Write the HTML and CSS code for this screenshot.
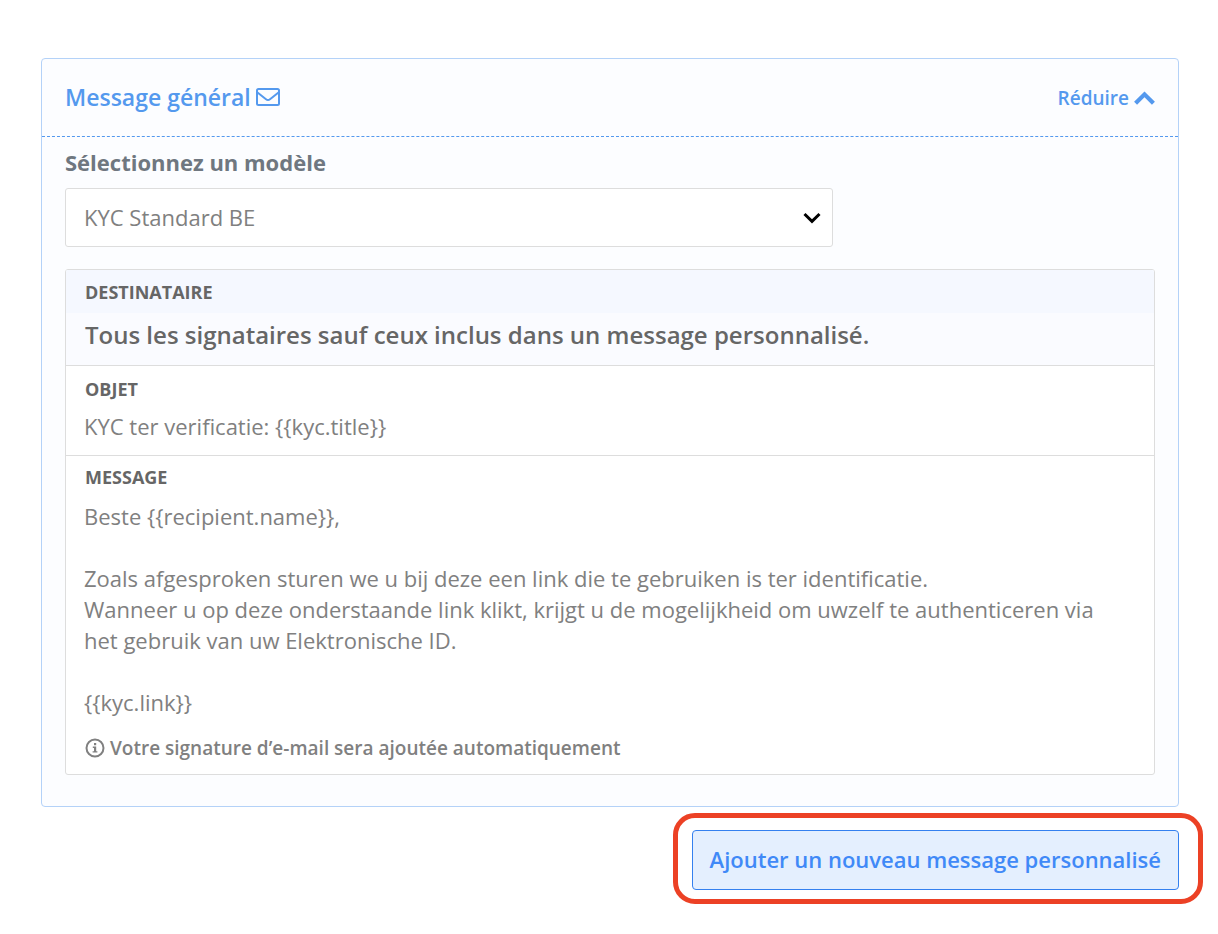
FILE: index.html
```html
<!DOCTYPE html>
<html lang="fr">
<head>
<meta charset="utf-8">
<meta name="viewport" content="width=device-width, initial-scale=1">
<title>Message général</title>
<link rel="stylesheet" href="styles.css">
</head>
<body>
<main class="page">
  <section class="card">
    <header class="card-header">
      <h2 class="card-title">Message général
        <svg class="icon-mail" viewBox="0 0 24 18" aria-hidden="true"><rect x="1" y="1" width="22" height="16" rx="1.5"/><path d="M1.5 4.5 10 11.2Q12 12.8 14 11.2L22.500 4.500"/></svg>
      </h2>
      <button class="collapse" type="button">Réduire
        <svg class="icon-up" viewBox="0 0 20 14" aria-hidden="true"><path d="M1.500 12.500 10 4 18.500 12.500"/></svg>
      </button>
    </header>
    <div class="card-body">
      <label class="select-label" for="template">Sélectionnez un modèle</label>
      <div class="select-wrap">
        <select class="select" id="template"><option>KYC Standard BE</option></select>
        <svg class="icon-down" viewBox="0 0 18 12" aria-hidden="true"><path d="M1.500 2 9 9.300 16.500 2"/></svg>
      </div>
      <div class="message">
        <div class="recipient">
          <h3 class="field-label recipient-label">Destinataire</h3>
          <p class="recipient-text">Tous les signataires sauf ceux inclus dans un message personnalisé.</p>
        </div>
        <div class="field subject">
          <label class="field-label" for="subject">Objet</label>
          <input class="text-input" id="subject" type="text" value="KYC ter verificatie: {{kyc.title}}">
        </div>
        <div class="field body">
          <label class="field-label" for="body">Message</label>
          <textarea class="text-area" id="body" rows="7">Beste {{recipient.name}},

Zoals afgesproken sturen we u bij deze een link die te gebruiken is ter identificatie.
Wanneer u op deze onderstaande link klikt, krijgt u de mogelijkheid om uwzelf te authenticeren via het gebruik van uw Elektronische ID.

{{kyc.link}}</textarea>
          <p class="note">
            <svg class="icon-info" viewBox="0 0 20 20" aria-hidden="true"><circle cx="10" cy="10" r="8.500"/><path d="M9 5h2.200v2.200H9zM7.800 8.500h3.400v4.700h1.200v1.400H7.600v-1.400h1.400V9.900H7.800z"/></svg>
            Votre signature d’e-mail sera ajoutée automatiquement
          </p>
        </div>
      </div>
    </div>
  </section>
  <div class="actions">
    <button class="add" type="button">Ajouter un nouveau message personnalisé</button>
  </div>
</main>
</body>
</html>
```
FILE: styles.css
```css
* { box-sizing: border-box; }
body {
  margin: 0;
  background: #fff;
  color: #666;
  font-family: "Open Sans", "Noto Sans", sans-serif;
}
h2, h3, p { margin: 0; }
button, input, select, textarea { font: inherit; color: inherit; }
svg { flex: none; fill: none; stroke: currentColor; }

.page { padding: 58px 39px 44px 41px; }
.card {
  border: 1px solid #b4d2f8;
  border-radius: 4px;
  background: #fcfdff;
}
.card-header {
  display: flex;
  align-items: center;
  justify-content: space-between;
  height: 78px;
  padding: 0 23px;
  border-bottom: 1px dashed #5499ee;
  color: #5499ee;
}
.card-title {
  display: flex;
  align-items: center;
  gap: 5px;
  padding-bottom: 2px;
  font-size: 23px;
  font-weight: 600;
}
.icon-mail { width: 24px; height: 18px; stroke-width: 2; }
.collapse {
  display: flex;
  align-items: center;
  gap: 5px;
  padding: 0;
  border: 0;
  background: none;
  font-size: 19px;
  font-weight: 600;
}
.icon-up { width: 21px; height: 15px; stroke-width: 4; }
.card-body { padding: 9px 23px 31px; }
.select-label {
  display: block;
  color: #6f7780;
  font-size: 22px;
  font-weight: 700;
  line-height: 32px;
}
.select-wrap {
  position: relative;
  max-width: 768px;
  margin: 10px 0 22px;
}
.select {
  display: block;
  width: 100%;
  height: 59px;
  padding: 0 48px 2px 18px;
  appearance: none;
  border: 1px solid #ddd;
  border-radius: 3px;
  background: #fff;
  color: #808080;
  font-size: 22px;
}
.icon-down {
  position: absolute;
  top: 24px;
  right: 12px;
  width: 18px;
  height: 12px;
  color: #000;
  stroke-width: 3;
  pointer-events: none;
}
.message {
  overflow: hidden;
  border: 1px solid #ddd;
  border-radius: 3px;
  background: #fff;
}
.field-label {
  display: block;
  color: #666;
  font-size: 18px;
  font-weight: 700;
  line-height: 24px;
  text-transform: uppercase;
}
.recipient { border-bottom: 1px solid #ddd; background: #fafbff; }
.recipient-label { padding: 10px 19px 9px; background: #f5f8ff; }
.recipient-text {
  padding: 6px 19px 14px;
  font-size: 24px;
  font-weight: 600;
  line-height: 32px;
}
.field { padding: 0 18px; color: #808080; }
.field .field-label { padding: 0 1px; }
.subject { padding-top: 11px; padding-bottom: 13px; border-bottom: 1px solid #ddd; }
.body { padding-top: 9px; padding-bottom: 12px; }
.text-input, .text-area {
  display: block;
  width: 100%;
  padding: 0;
  border: 0;
  outline: 0;
  background: none;
  font-size: 22px;
  line-height: 31px;
}
.text-input { height: 31px; margin-top: 10px; }
.text-area { margin-top: 12px; padding-right: 18px; resize: none; overflow: hidden; }
.note {
  display: flex;
  align-items: center;
  gap: 5px;
  margin-top: 16px;
  font-size: 19px;
  font-weight: 600;
  line-height: 28px;
}
.icon-info { width: 20px; height: 20px; margin-left: 1px; stroke-width: 2; }
.icon-info path { fill: currentColor; stroke: none; }
.actions { display: flex; justify-content: flex-end; margin-top: 23px; }
.add {
  position: relative;
  height: 60px;
  padding: 0 17px 2px;
  border: 1px solid #3480ef;
  border-radius: 4px;
  background: #e4effe;
  color: #4089f7;
  font-size: 22px;
  font-weight: 600;
}
.add::after {
  content: "";
  position: absolute;
  inset: -18px -25px -15px -20px;
  border: 5px solid #ec4125;
  border-radius: 22px;
  pointer-events: none;
}
```
